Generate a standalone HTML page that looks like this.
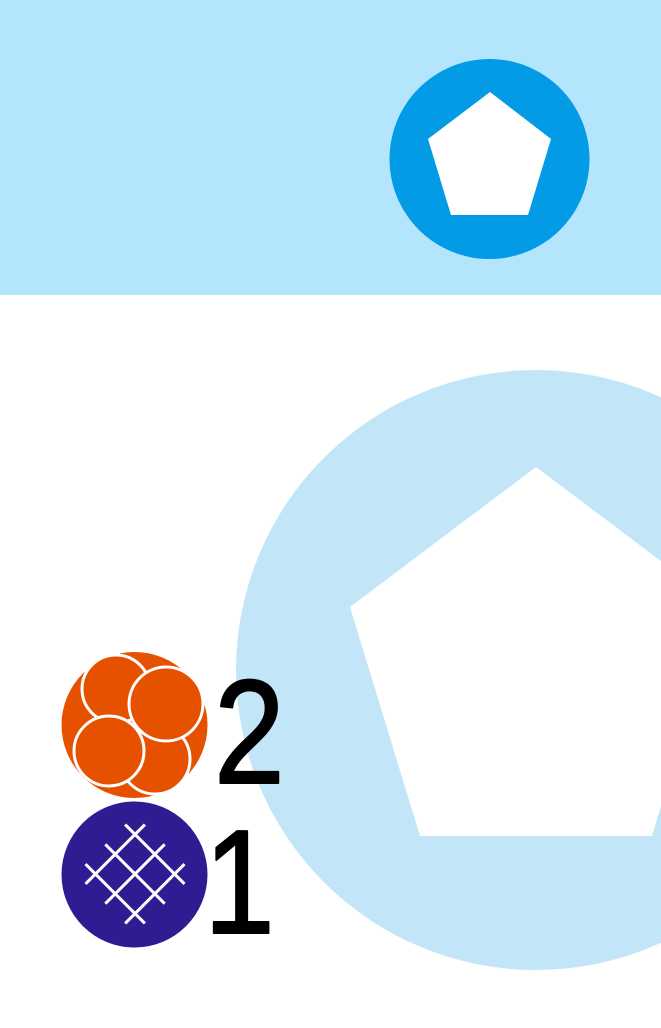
<!DOCTYPE html>
<html><head><meta charset="utf-8"><style>
html,body{margin:0;padding:0;width:661px;height:1028px;overflow:hidden;background:#fff}
svg{display:block}
</style></head><body>
<svg width="661" height="1028" viewBox="0 0 661 1028" xmlns="http://www.w3.org/2000/svg">
<rect x="0" y="0" width="661" height="295" fill="#b3e5fc"/>
<circle cx="489.5" cy="159" r="100" fill="#039be5"/>
<polygon points="490,92 551,139 528,215 451,215 428,139" fill="#fff"/>
<circle cx="536" cy="670" r="300" fill="#c2e6f7"/>
<polygon points="536,467 722,607 652,836 420,836 350,607" fill="#fff"/>
<circle cx="134.5" cy="725" r="73" fill="#e65100"/>
<g fill="#e65100" stroke="#fff" stroke-width="3">
<circle cx="116" cy="689" r="34"/>
<circle cx="155" cy="759" r="35"/>
<circle cx="166" cy="704" r="37"/>
<circle cx="109" cy="751" r="35"/>
</g>
<circle cx="134.5" cy="874.5" r="73" fill="#311b92"/>
<g transform="translate(135,874) rotate(45)" stroke="#fff" stroke-width="3">
<line x1="-42" y1="-28" x2="42" y2="-28"/><line x1="-42" y1="0" x2="42" y2="0"/><line x1="-42" y1="28" x2="42" y2="28"/>
<line x1="-28" y1="-42" x2="-28" y2="42"/><line x1="0" y1="-42" x2="0" y2="42"/><line x1="28" y1="-42" x2="28" y2="42"/>
</g>
<g transform="translate(214,0) scale(0.86,1)">
<text x="0" y="783" font-family="Liberation Sans, sans-serif" font-size="148" fill="#000" stroke="#000" stroke-width="2" stroke-linejoin="round">2</text>
</g>
<g transform="translate(204,0) scale(0.86,1)">
<text x="0" y="933" font-family="Liberation Sans, sans-serif" font-size="148" fill="#000" stroke="#000" stroke-width="2" stroke-linejoin="round">1</text>
</g>
</svg>
</body></html>
